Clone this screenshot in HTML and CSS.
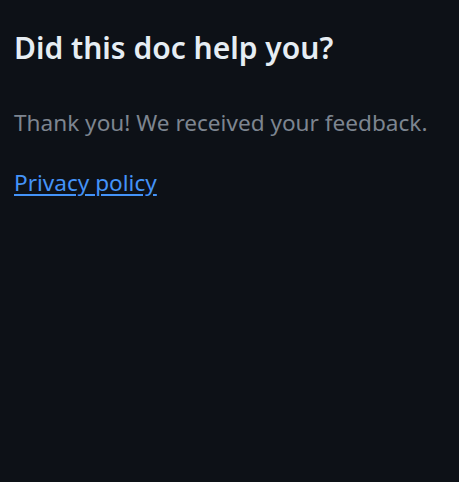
FILE: index.html
```html
<!DOCTYPE html>
<html lang="en">
<head>
<meta charset="utf-8">
<link rel="stylesheet" href="styles.css">
</head>
<body>
<section class="feedback">
  <h2 class="title">Did this doc help you?</h2>
  <p class="thanks">Thank you! We received your feedback.</p>
  <a class="privacy" href="#">Privacy policy</a>
</section>
</body>
</html>
```

FILE: styles.css
```css
html, body {
  margin: 0;
  padding: 0;
  background: #0d1117;
  height: 100%;
}
body {
  font-family: "Noto Sans", "Open Sans", sans-serif;
}
.feedback {
  padding: 27px 14px;
  display: flex;
  flex-direction: column;
  align-items: flex-start;
}
.title {
  margin: 0;
  font-size: 30px;
  font-weight: 600;
  color: #e6edf3;
  line-height: 41px;
}
.thanks {
  margin: 39px 0 0;
  font-size: 22.6px;
  color: #7d8590;
  line-height: 31px;
}
.privacy {
  margin-top: 29px;
  font-size: 22.6px;
  color: #4493f8;
  line-height: 31px;
  text-underline-offset: 3px;
}
```
